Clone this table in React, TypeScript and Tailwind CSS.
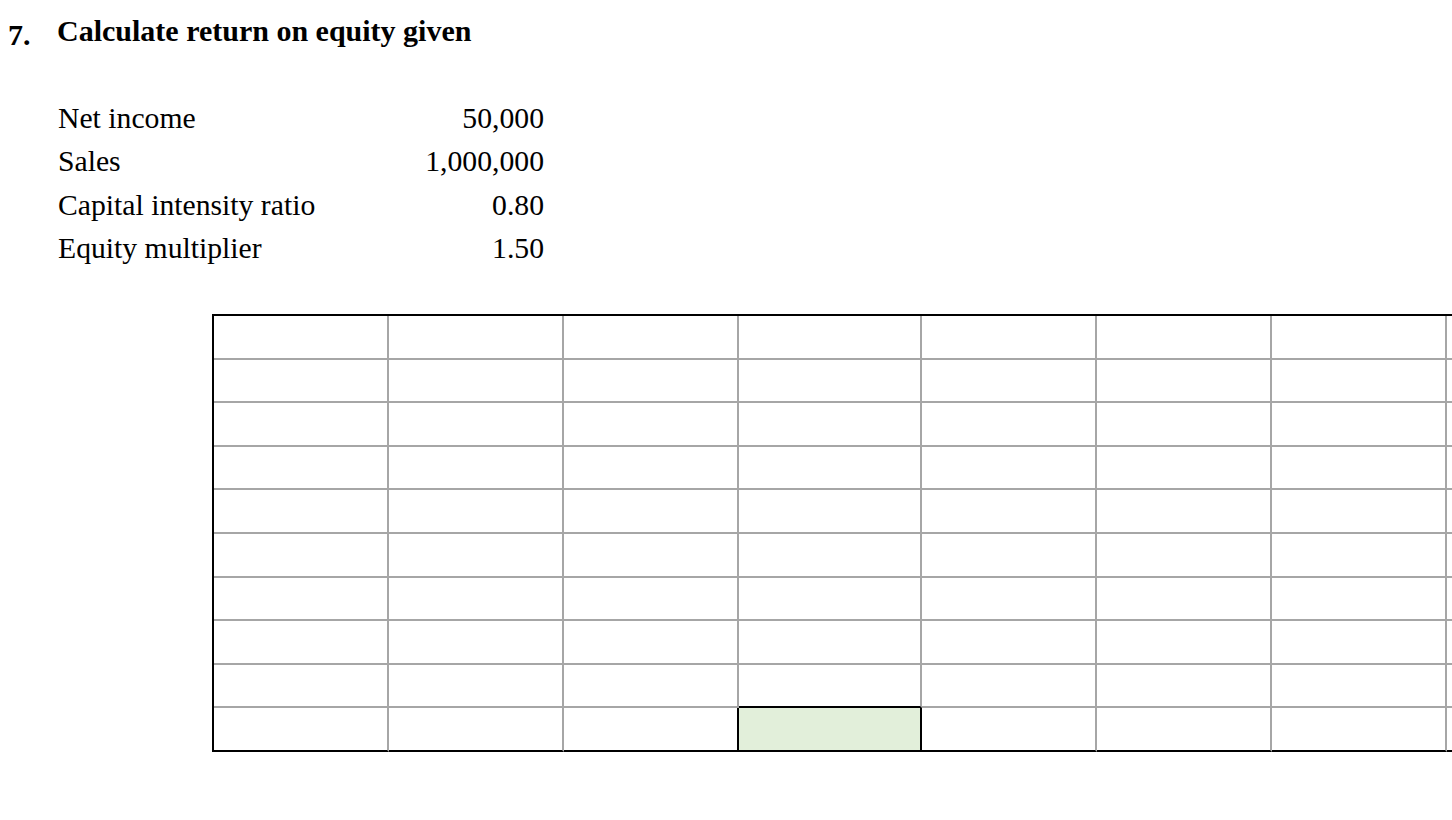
const cols = [175, 175, 175, 183, 175, 175, 175, 175]

const inputs = [
  { label: "Net income", value: "50,000" },
  { label: "Sales", value: "1,000,000" },
  { label: "Capital intensity ratio", value: "0.80" },
  { label: "Equity multiplier", value: "1.50" },
]

const serif = "font-['Liberation_Serif','Times_New_Roman',serif]"

function Cell({ row, col }: { row: number; col: number }) {
  const last = row === 9
  const answer = last && col === 3
  // neighbours of the answer cell draw the black edge on their side
  const rightBlack = last && col === 2
  const bottomBlack = last || (row === 8 && col === 3)
  return (
    <div
      className={
        "box-border h-[43.6px] border-r-2 border-b-2 " +
        (answer ? "bg-[#e2efda] border-r-black " : rightBlack ? "border-r-black " : "border-r-[#a6a6a6] ") +
        (bottomBlack ? "border-b-black" : "border-b-[#a6a6a6]")
      }
    />
  )
}

export default function App() {
  return (
    <div className={`w-[1452px] h-[820px] overflow-hidden bg-white text-black ${serif}`}>
      <div className="pt-[8.8px]">
        {/* title row */}
        <div className="flex h-[43.6px] items-end">
          <div className="w-[57px] pl-[8px] pb-[2.5px] text-[30px] font-bold leading-[30px]">7.</div>
          <div className="pb-[6.5px] text-[30px] font-bold leading-[30px]">Calculate return on equity given</div>
        </div>
        <div className="h-[43.6px]" />

        {inputs.map((r) => (
          <div key={r.label} className="flex h-[43.6px] items-end">
            <div className="ml-[58px] flex w-[486px] justify-between pb-[7px] text-[29.7px] leading-[30px]">
              <span>{r.label}</span>
              <span>{r.value}</span>
            </div>
          </div>
        ))}
        <div className="h-[43.6px]" />

        {/* answer grid */}
        <div className="ml-[212px] w-[1400px] border-t-2 border-l-2 border-black">
          {Array.from({ length: 10 }).map((_, row) => (
            <div key={row} className="grid grid-cols-[175px_175px_175px_183px_175px_175px_175px_175px]">
              {cols.map((_, col) => (
                <Cell key={col} row={row} col={col} />
              ))}
            </div>
          ))}
        </div>
      </div>
    </div>
  )
}
